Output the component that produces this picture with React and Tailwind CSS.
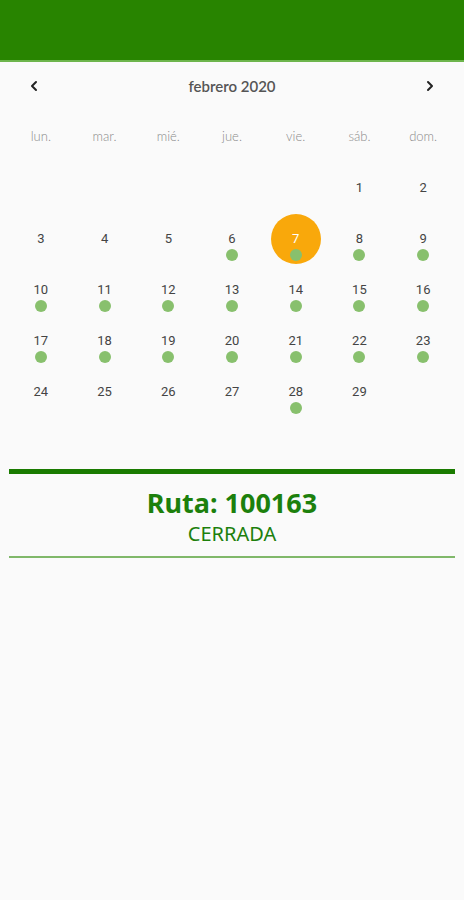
import React from 'react';
import { ChevronLeft, ChevronRight } from 'lucide-react';

const days = ['lun.', 'mar.', 'mié.', 'jue.', 'vie.', 'sáb.', 'dom.'];
const withDot = [6, 7, 8, 9, 10, 11, 12, 13, 14, 15, 16, 17, 18, 19, 20, 21, 22, 23, 28];

function Cell({ day }) {
  if (!day) return <div className="h-[51px]" />;
  const selected = day === 7;
  return (
    <div className="relative h-[51px] flex flex-col items-center pt-[17px]">
      {selected && (
        <div className="absolute left-1/2 top-[0px] -translate-x-1/2 w-[50px] h-[50px] rounded-full bg-[#f9a80b]" />
      )}
      <span
        className={`relative text-[13px] leading-[16px] ${selected ? 'text-white' : 'text-[#444]'}`}
        style={{ fontFamily: 'Roboto, sans-serif' }}
      >
        {day}
      </span>
      {withDot.includes(day) && <div className="relative mt-[2px] w-3 h-3 rounded-full bg-[#88c06d]" />}
    </div>
  );
}

export default function App() {
  const cells = [null, null, null, null, null, 1, 2];
  for (let d = 3; d <= 29; d++) cells.push(d);
  while (cells.length % 7) cells.push(null);

  return (
    <div className="w-[464px] h-[900px] bg-[#fafafa] flex flex-col" style={{ fontFamily: 'Lato, sans-serif' }}>
      <div className="h-[60px] bg-[#288400]" />
      <div className="h-[2px] bg-[#6db54c]" />

      <div className="h-[48px] flex items-center justify-between px-[26px]">
        <ChevronLeft size={16} strokeWidth={3} className="text-[#222]" />
        <span className="text-[15px] text-[#555] font-semibold">febrero 2020</span>
        <ChevronRight size={16} strokeWidth={3} className="text-[#222]" />
      </div>

      <div className="px-[9px]">
        <div className="grid grid-cols-7 h-[30px] mt-[12px] items-center">
          {days.map((d) => (
            <div key={d} className="text-center text-[13px] font-light text-[#8a8a8a]">{d}</div>
          ))}
        </div>
        <div className="grid grid-cols-7 mt-[11px]">
          {cells.map((d, i) => (
            <Cell key={i} day={d} />
          ))}
        </div>
      </div>

      <div className="mx-[9px] mt-[51px] h-[5px] bg-[#1a7b00]" />
      <div className="flex flex-col items-center mt-[11px]" style={{ fontFamily: '"Noto Sans", sans-serif' }}>
        <div className="text-[27px] leading-[36px] font-bold text-[#1c800c]">Ruta: 100163</div>
        <div className="text-[20px] leading-[26px] text-[#1c800c]">CERRADA</div>
      </div>
      <div className="mx-[9px] mt-[9px] h-[2px] bg-[#80b86a]" />
    </div>
  );
}
